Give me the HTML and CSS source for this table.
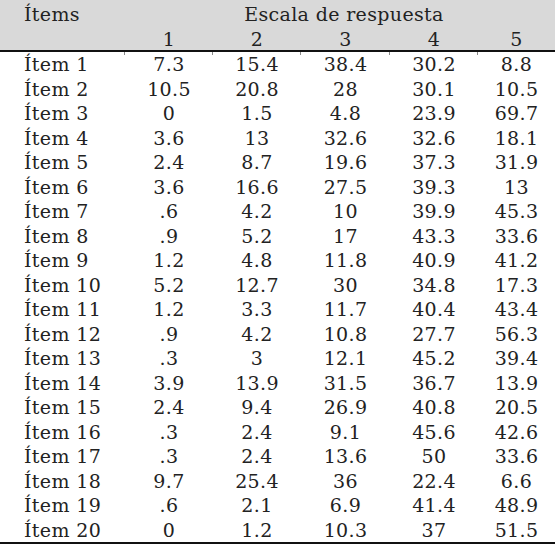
FILE: index.html
```html
<!DOCTYPE html>
<html lang="es">
<head>
<meta charset="utf-8">
<link rel="stylesheet" href="styles.css">
</head>
<body>
<table class="tbl">
  <colgroup>
    <col class="c-item"><col class="c-n"><col class="c-n"><col class="c-n3"><col class="c-n"><col class="c-n5">
  </colgroup>
  <thead>
    <tr class="h1"><th class="lbl">Ítems</th><th colspan="5" class="scale">Escala de respuesta</th></tr>
    <tr class="h2"><th></th><th>1</th><th>2</th><th>3</th><th>4</th><th>5</th></tr>
  </thead>
  <tbody>
    <tr class="first"><td class="lbl">Ítem 1</td><td>7.3</td><td>15.4</td><td>38.4</td><td>30.2</td><td>8.8</td></tr>
    <tr><td class="lbl">Ítem 2</td><td>10.5</td><td>20.8</td><td>28</td><td>30.1</td><td>10.5</td></tr>
    <tr><td class="lbl">Ítem 3</td><td>0</td><td>1.5</td><td>4.8</td><td>23.9</td><td>69.7</td></tr>
    <tr><td class="lbl">Ítem 4</td><td>3.6</td><td>13</td><td>32.6</td><td>32.6</td><td>18.1</td></tr>
    <tr><td class="lbl">Ítem 5</td><td>2.4</td><td>8.7</td><td>19.6</td><td>37.3</td><td>31.9</td></tr>
    <tr><td class="lbl">Ítem 6</td><td>3.6</td><td>16.6</td><td>27.5</td><td>39.3</td><td>13</td></tr>
    <tr><td class="lbl">Ítem 7</td><td>.6</td><td>4.2</td><td>10</td><td>39.9</td><td>45.3</td></tr>
    <tr><td class="lbl">Ítem 8</td><td>.9</td><td>5.2</td><td>17</td><td>43.3</td><td>33.6</td></tr>
    <tr><td class="lbl">Ítem 9</td><td>1.2</td><td>4.8</td><td>11.8</td><td>40.9</td><td>41.2</td></tr>
    <tr><td class="lbl">Ítem 10</td><td>5.2</td><td>12.7</td><td>30</td><td>34.8</td><td>17.3</td></tr>
    <tr><td class="lbl">Ítem 11</td><td>1.2</td><td>3.3</td><td>11.7</td><td>40.4</td><td>43.4</td></tr>
    <tr><td class="lbl">Ítem 12</td><td>.9</td><td>4.2</td><td>10.8</td><td>27.7</td><td>56.3</td></tr>
    <tr><td class="lbl">Ítem 13</td><td>.3</td><td>3</td><td>12.1</td><td>45.2</td><td>39.4</td></tr>
    <tr><td class="lbl">Ítem 14</td><td>3.9</td><td>13.9</td><td>31.5</td><td>36.7</td><td>13.9</td></tr>
    <tr><td class="lbl">Ítem 15</td><td>2.4</td><td>9.4</td><td>26.9</td><td>40.8</td><td>20.5</td></tr>
    <tr><td class="lbl">Ítem 16</td><td>.3</td><td>2.4</td><td>9.1</td><td>45.6</td><td>42.6</td></tr>
    <tr><td class="lbl">Ítem 17</td><td>.3</td><td>2.4</td><td>13.6</td><td>50</td><td>33.6</td></tr>
    <tr><td class="lbl">Ítem 18</td><td>9.7</td><td>25.4</td><td>36</td><td>22.4</td><td>6.6</td></tr>
    <tr><td class="lbl">Ítem 19</td><td>.6</td><td>2.1</td><td>6.9</td><td>41.4</td><td>48.9</td></tr>
    <tr class="last"><td class="lbl">Ítem 20</td><td>0</td><td>1.2</td><td>10.3</td><td>37</td><td>51.5</td></tr>
  </tbody>
</table>
</body>
</html>
```
FILE: styles.css
```css
html, body {
  margin: 0;
  padding: 0;
  background: #fff;
}
.tbl {
  border-collapse: collapse;
  table-layout: fixed;
  width: 555px;
  font-family: "DejaVu Serif", "Liberation Serif", serif;
  font-size: 19px;
  letter-spacing: 0.35px;
  color: #222;
}
.c-item { width: 125px; }
.c-n { width: 88px; }
.c-n3 { width: 89px; }
.c-n5 { width: 77px; }
th, td {
  padding: 0;
  text-align: center;
  font-weight: normal;
  white-space: nowrap;
}
thead { background: #d9d9d9; }
.h1 th { height: 27px; vertical-align: middle; line-height: 24px; padding-bottom: 1px; }
.h2 th { height: 22px; vertical-align: bottom; line-height: 22px; border-bottom: 2px solid #111; }
.h1 .scale { padding-left: 8px; }
th.lbl, td.lbl { text-align: left; padding-left: 24px; }
tbody td { height: 24.5px; line-height: 24px; position: relative; }
tbody tr.last td { border-bottom: 2px solid #111; }
tbody tr.first td + td::before,
tbody tr.last td + td::after {
  content: "";
  position: absolute;
  left: -1px;
  width: 1px;
  height: 3px;
  background: #888;
}
tbody tr.first td + td::before { top: 0; }
tbody tr.last td + td::after { bottom: -5px; }
```
